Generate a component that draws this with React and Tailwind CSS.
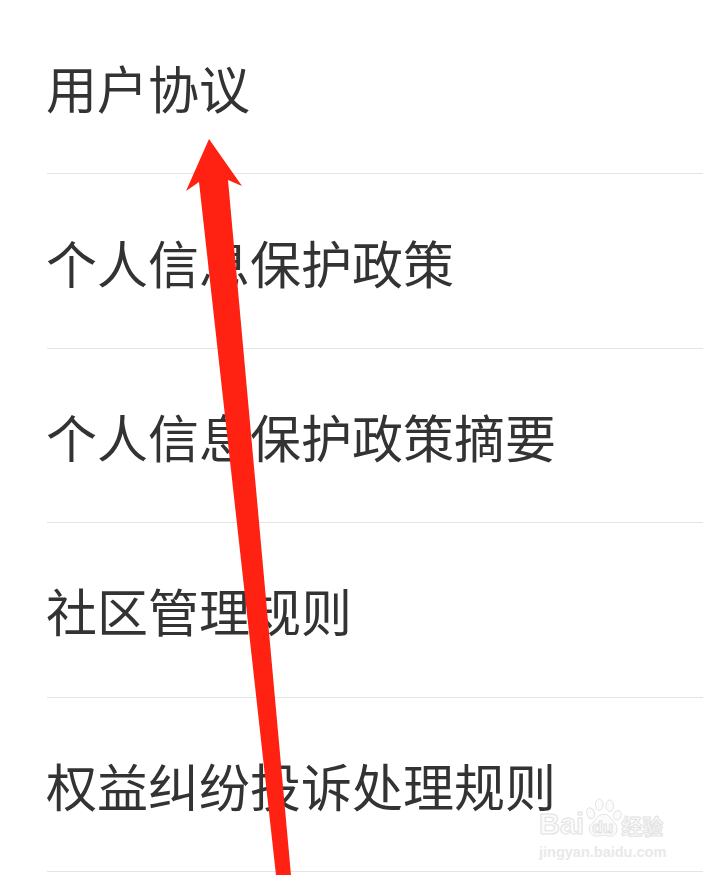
const rows = ['用户协议', '个人信息保护政策', '个人信息保护政策摘要', '社区管理规则', '权益纠纷投诉处理规则'];

const outline = '[-webkit-text-stroke:1px_#e2e2e2] text-[#fbfbfb]';

function Arrow() {
  return (
    <svg className="absolute left-0 top-0" width="703" height="875" viewBox="0 0 703 875">
      <polygon points="209,139 242,186 228,180 291,875 276,875 199,182 186,191" fill="#ff2112" />
    </svg>
  );
}

// paw with "du" sitting in the pad
function Paw() {
  return (
    <div className="relative w-[37px] h-[42px] flex items-end justify-center pb-[2px]">
      <svg className="absolute inset-0" width="40" height="42" viewBox="0 0 42 44" fill="#fbfbfb" stroke="#e2e2e2" strokeWidth="1">
        <ellipse cx="7" cy="16" rx="4" ry="6" transform="rotate(-20 7 16)" />
        <ellipse cx="16" cy="7" rx="4" ry="6" />
        <ellipse cx="27" cy="8" rx="4" ry="6" />
        <ellipse cx="35" cy="18" rx="4" ry="5" transform="rotate(20 35 18)" />
        <path d="M21 17c6 0 8 6 12 10 4 5 1 14-6 13-3 0-4-1-6-1s-4 1-7 1C6 40 3 32 8 27c5-4 6-10 13-10z" />
      </svg>
      <span className={`relative text-[17px] leading-[20px] font-bold ${outline}`}>du</span>
    </div>
  );
}

function Watermark() {
  return (
    <div className="absolute left-[539px] top-[798px] w-[130px] flex flex-col gap-[4px] font-['Liberation_Sans',sans-serif]">
      <div className="flex items-end">
        <span className={`text-[29px] leading-[32px] font-bold ${outline}`}>Bai</span>
        <Paw />
        <span className={`text-[21px] leading-[30px] font-['Noto_Sans_CJK_SC',sans-serif] font-bold ${outline}`}>经验</span>
      </div>
      <span className="text-[14.5px] leading-[16px] font-bold whitespace-nowrap text-[#e9e9e9]">jingyan.baidu.com</span>
    </div>
  );
}

export default function App() {
  return (
    <div className="relative w-[703px] h-[875px] overflow-hidden bg-white font-['Noto_Sans_CJK_SC',sans-serif] text-[#333333]">
      <ul className="pl-[47px]">
        {rows.map((row) => (
          <li key={row} className="h-[174.4px] flex items-center pt-[2px] border-b border-[#e4e4e4] text-[51px] leading-none">
            <span className="-ml-px">{row}</span>
          </li>
        ))}
      </ul>
      <Watermark />
      <Arrow />
    </div>
  );
}
